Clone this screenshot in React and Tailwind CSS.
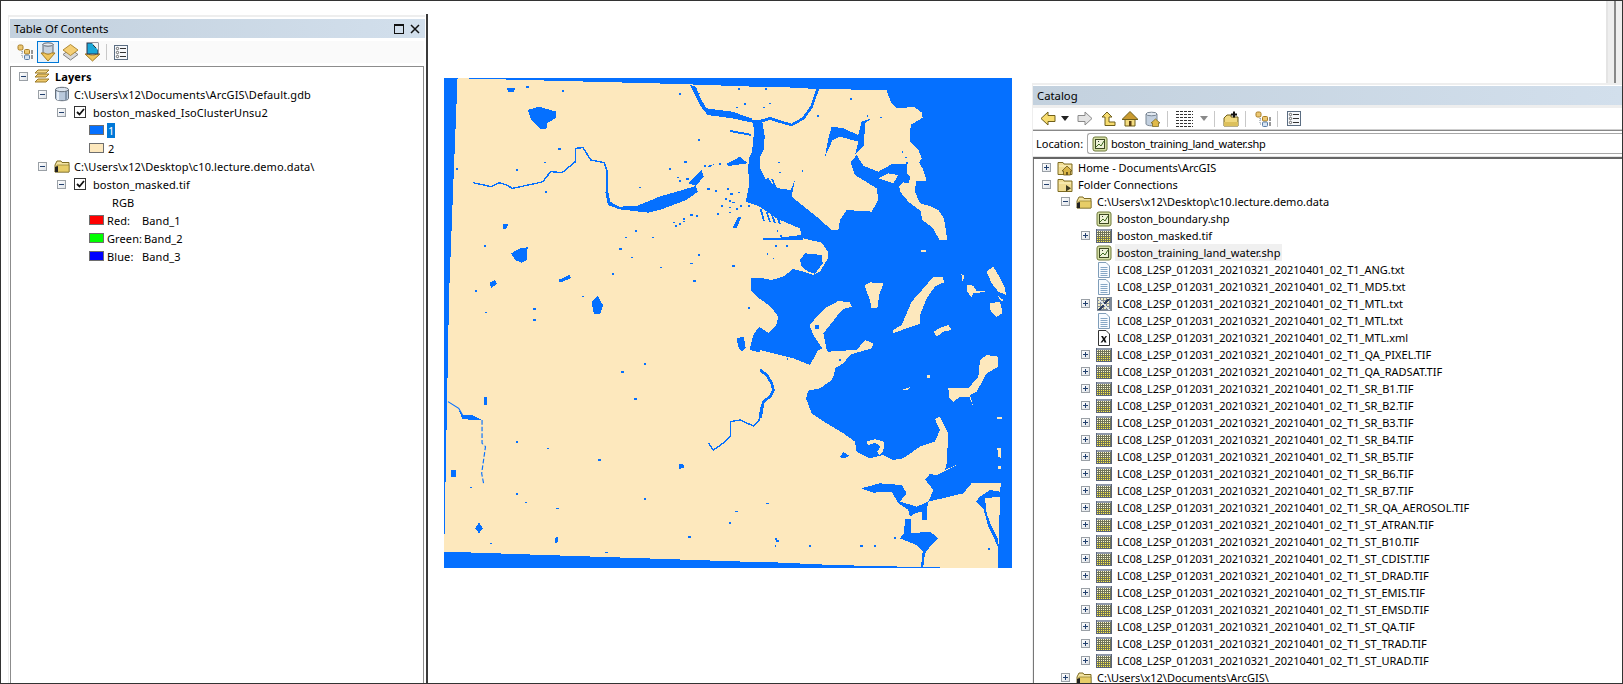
import React from "react";

/* ---------- small icons ---------- */
const Expander = ({ open }) => (
  <span className="relative block w-[9px] h-[9px] shrink-0 border border-[#9aa0a6] bg-gradient-to-br from-white to-[#dfe3e8]">
    <span className="absolute left-[1px] top-[3px] w-[5px] h-[1px] bg-[#22406e]" />
    {!open && <span className="absolute left-[3px] top-[1px] w-[1px] h-[5px] bg-[#22406e]" />}
  </span>
);

const Svg = ({ w = 16, h = 16, children }) => (
  <svg width={w} height={h} viewBox="0 0 16 16" className="shrink-0 block">
    {children}
  </svg>
);

const DbIcon = () => (
  <Svg>
    <path d="M1.5 3.5v9c0 1.2 2.9 2.2 6.5 2.2s6.5-1 6.5-2.2v-9z" fill="#b9c9dc" stroke="#66707c" />
    <path d="M4 5v9" stroke="#e8eff7" strokeWidth="2" />
    <path d="M12 5v9" stroke="#8496ab" strokeWidth="2" />
    <ellipse cx="8" cy="3.5" rx="6.5" ry="2.2" fill="#dbe4ee" stroke="#66707c" />
  </Svg>
);

const HomeFolderIcon = () => (
  <Svg>
    <path d="M1 2.5h5L7 4h8v10.5H1z" fill="#f0dc92" stroke="#7d6b22" />
    <path d="M2 6h12" stroke="#fff6c8" />
    <path d="M5 11l5-5 5 5h-1.5v4h-7v-4z" fill="#d8b445" stroke="#6b5518" strokeWidth=".8" />
    <path d="M9 12h2v3H9z" fill="#6b5518" />
  </Svg>
);

const ConnFolderIcon = () => (
  <Svg>
    <path d="M1 2.5h5L7 4h8v10.5H1z" fill="#f0dc92" stroke="#7d6b22" />
    <path d="M2 6h12" stroke="#fff6c8" />
    <path d="M9 8l5 3.2-5 3.2z" fill="#3d3a22" />
  </Svg>
);

const OpenFolderIcon = () => (
  <Svg>
    <path d="M3 3h4l1 1.5h7V14H1V7z" fill="#f3e3a0" stroke="#7d6b22" />
    <path d="M3 7h12v7H1z" fill="#e7cd68" stroke="#7d6b22" strokeWidth=".6" />
    <path d="M1 9l3-1v6H1z" fill="#222" />
  </Svg>
);

const RasterIcon = () => (
  <svg width="16" height="16" viewBox="0 0 16 16" className="shrink-0 block" shapeRendering="crispEdges">
    <rect x="0" y="1" width="16" height="14" rx="1.5" fill="#59647a" />
    <rect x="1" y="1" width="14" height="2" fill="#8d97a8" />
    <rect x="1" y="3" width="14" height="11" fill="#6f7358" />
    {[3, 5, 7, 9, 11, 13].map((y) =>
      [1, 3, 5, 7, 9, 11, 13].map((x) => (
        <rect key={x + "-" + y} x={x} y={y} width="1" height="1" fill={y > 8 ? "#fff04a" : "#fffbd0"} />
      ))
    )}
  </svg>
);

const ShpIcon = () => (
  <Svg>
    <rect x="1" y="1" width="14" height="14" rx="2" fill="#d5dfa6" stroke="#6f7a3a" />
    <rect x="3.5" y="3.5" width="9" height="9" fill="#eef2d8" stroke="#3e4a22" />
    <path d="M4 11l3-3 2 2 3-5" fill="none" stroke="#3e6a22" />
    <path d="M6 5h1v1H6z" fill="#333" />
  </Svg>
);

const TextIcon = () => (
  <Svg>
    <path d="M2.5 .5h7.5l3.5 3.5v11.5h-11z" fill="#f7fbff" stroke="#7f9db9" />
    <path d="M4.5 5.5h7M4.5 7.5h7M4.5 9.5h7M4.5 11.5h7M4.5 13.5h7" stroke="#86a7c6" />
  </Svg>
);

const MetaIcon = () => (
  <svg width="16" height="16" viewBox="0 0 16 16" className="shrink-0 block" shapeRendering="crispEdges">
    <rect x="0.5" y="1" width="15" height="14" fill="#7f8a98" />
    {[2, 5, 8, 11].map((y) =>
      [2, 5, 8, 11].map((x) => (
        <rect key={x + "-" + y} x={x} y={y} width="2" height="2" fill="#f1ecc2" />
      ))
    )}
    <path d="M3 14L13 3" stroke="#2f3f5f" strokeWidth="2" />
    <path d="M3 3l10 11" stroke="#dfe7f0" strokeWidth="1.5" />
  </svg>
);

const XmlIcon = () => (
  <Svg>
    <path d="M2.5 .5h7.5l3.5 3.5v11.5h-11z" fill="#fff" stroke="#333" />
    <path d="M5 6h2l1 2 1.600-2H11L9 9l1.500 3.500H8.500L7.800 10.500 6.200 12.500H4.500L7 9.200z" fill="#111" />
  </Svg>
);

const TreeToolIcon = () => (
  <svg width="17" height="16" viewBox="0 0 17 16" className="shrink-0 block">
    <path d="M5 3v10h6M5 8h6" fill="none" stroke="#7d8b99" strokeDasharray="1 1" />
    <rect x="1" y="1" width="5" height="5" rx="1.500" fill="#ecc873" stroke="#a87d25" />
    <rect x="7.500" y="5.500" width="5" height="4.500" rx="1" fill="#ecc873" stroke="#a87d25" />
    <rect x="7.500" y="11" width="5" height="4.500" rx="1" fill="#d5e3f2" stroke="#5a7da6" />
    <path d="M14 7h2M14 9h2M14 12h2M14 14h2" stroke="#333" />
  </svg>
);

const DownArrowDb = () => (
  <svg width="16" height="20" viewBox="0 0 16 20" className="block">
    <path d="M3 2v9c0 1 2.200 1.700 5 1.700s5-.7 5-1.700V2z" fill="#c7d2de" stroke="#5e6773" />
    <ellipse cx="8" cy="2.500" rx="5" ry="1.700" fill="#e4eaf1" stroke="#5e6773" />
    <path d="M1 11h3.500c1 1.500 6 1.500 7 0H15l-7 8z" fill="#f0c55b" stroke="#a27a22" />
  </svg>
);

const LayersToolIcon = () => (
  <svg width="17" height="18" viewBox="0 0 17 18" className="block">
    <path d="M8.500 6L16 11.500 8.500 17 1 11.500z" fill="#d8d8d8" stroke="#808080" />
    <path d="M8.500 1.500L16 7l-7.500 5.500L1 7z" fill="#f5cf75" stroke="#b08a34" />
  </svg>
);

const SourceToolIcon = () => (
  <svg width="17" height="20" viewBox="0 0 17 20" className="block">
    <path d="M1 12h3.500c1 1.500 7 1.500 8 0H16l-7.500 7z" fill="#f0c55b" stroke="#a27a22" />
    <rect x="3" y="1" width="11" height="11" fill="#1aa7d8" stroke="#334" />
    <path d="M8 1h6v7z" fill="#f5f5f5" />
    <path d="M9 3l3 3" stroke="#333" />
  </svg>
);

const ListIcon = () => (
  <svg width="14" height="15" viewBox="0 0 14 15" className="block">
    <rect x=".5" y=".5" width="13" height="14" fill="#f6f8fb" stroke="#5b6d82" />
    <path d="M6 3.500h6M6 7.500h6M6 11.500h6" stroke="#333" />
    <circle cx="3.500" cy="3.500" r="1.200" fill="#fff" stroke="#333" strokeWidth=".7" />
    <circle cx="3.500" cy="7.500" r="1.200" fill="#fff" stroke="#333" strokeWidth=".7" />
    <circle cx="3.500" cy="11.500" r="1.200" fill="#fff" stroke="#333" strokeWidth=".7" />
  </svg>
);

const LayersIcon = () => (
  <svg width="16" height="15" viewBox="0 0 16 15" className="block">
    <path d="M4 1h11l-3 3H1z" fill="#f5d98a" stroke="#9a7a2a" />
    <path d="M4 5h11l-3 3H1z" fill="#eec86a" stroke="#9a7a2a" />
    <path d="M4 10h11l-3 3H1z" fill="#eec86a" stroke="#9a7a2a" />
  </svg>
);

const CheckBox = () => (
  <span className="flex items-center justify-center w-[12px] h-[12px] shrink-0 border border-[#333] bg-white">
    <svg width="9" height="8" viewBox="0 0 9 8">
      <path d="M1 4l2.500 2.500L8 1" fill="none" stroke="#111" strokeWidth="1.800" />
    </svg>
  </span>
);

const Sep = () => <span className="block w-[1px] h-[16px] bg-[#c8c8c8] shrink-0" />;

/* ---------- map ---------- */
const Z4 = "translate(430 60) scale(0.3827 0.3333)";
const Z = "scale(0.3333)";

const west =
  "72,54 112,56 450,66 650,72 870,81 870,180 850,180 840,290 830,320 835,370 825,425 862,440 905,475 966,505 971,525 914,533 975,535 1023,548 1040,575 1040,595 1019,635 1001,645 975,635 949,627 923,650 892,660 862,653 840,655 838,690 860,715 890,740 910,770 905,795 885,820 860,800 845,825 835,870 870,880 870,1507 37,1475 40,1300 45,1000 50,700 60,400";

const northEast =
  "0,36 60,36 172,42 205,42 380,46 392,80 410,100 462,96 485,112 488,128 452,150 450,200 475,225 485,250 478,262 490,285 500,318 468,318 465,350 480,385 510,393 535,405 552,430 562,495 538,495 520,460 487,435 482,408 445,380 420,350 418,335 430,322 445,325 452,305 440,295 440,268 395,268 355,290 310,272 290,240 272,262 285,300 350,340 355,375 335,410 260,405 240,435 235,465 215,465 170,425 95,365 105,315 92,345 55,340 15,310 0,280";

const northEastIslands = [
  "355,310 385,295 415,300 400,325",
  "315,630 330,622 370,625 358,660 352,700 335,700 328,670 318,645",
  "400,775 440,760 480,747 480,720 500,670 525,635 552,622 548,605 520,605 495,635 455,680 425,750 400,765",
  "148,750 195,700 235,678 270,682 275,695 250,702 225,730 222,735 190,775 200,825 190,825 160,780",
  "680,590 700,575 715,600 735,640 738,660 715,650 695,625",
  "620,630 640,632 650,648 680,650 640,655 635,668 622,650",
  "690,685 720,680 728,715 710,725 692,710",
  "710,660 730,675 725,680",
  "604,598 614,600 608,620",
  "483,525 498,525 498,530 483,530",
];

const northEastDots = [
  [270, 70], [320, 120], [360, 125], [425, 228], [435, 245], [10, 95], [55, 260], [125, 285], [50, 465], [20, 535],
  [60, 480], [45, 510], [38, 548], [78, 510], [478, 210], [485, 240], [490, 250], [172, 120], [58, 290], [438, 262],
];

const southEast =
  "0,90 40,100 100,115 150,135 175,90 195,85 205,95 250,92 290,90 315,60 340,70 335,85 300,95 270,105 250,130 225,145 222,165 215,180 180,205 145,212 138,235 155,280 200,310 250,340 285,365 290,395 330,415 370,405 400,420 430,415 480,380 525,365 540,330 525,298 540,290 565,340 560,430 555,450 590,435 560,450 530,465 510,462 495,478 520,510 505,545 610,520 635,490 722,488 715,690 715,744 600,744 215,735 0,725";

const southEastIslands = [
  "520,35 545,22 565,15 575,30 550,35 530,50",
  "565,205 600,205 625,205 655,170 660,120 680,105 715,110 715,140 680,160 650,215 630,225 640,260 628,230 600,230 580,245 568,235",
  "710,292 725,292 725,298 712,298",
  "430,208 450,202 445,208 432,212",
  "500,165 510,165 510,175 503,175",
  "712,385 722,385 722,415 715,410",
  "715,438 722,438 722,448 715,448",
  "318,365 345,358 372,365 370,395 358,405 352,395 362,380 345,368 325,375",
];

const southEastWater = [
  "303,505 360,490 425,495 440,520 420,545 470,560 505,545 500,575 500,600 485,600 485,575 465,580 450,590 445,570 415,550 395,515 340,518",
  "435,598 452,598 452,640 510,635 535,655 510,680 495,700 490,740 483,740 488,695 470,675 420,655 432,640",
  "720,515 690,510 660,530 648,545 670,565 685,620 700,650 715,685 715,660 695,620 680,580 675,535 720,530",
  "240,412 250,396 268,408 255,415",
];

const southEastDots = [
  [18, 548], [46, 655], [148, 675], [342, 675], [300, 675], [44, 675], [80, 115], [238, 118], [70, 100], [95, 110], [684, 685], [402, 652],
];

const westWater = [
  "680,75 695,80 705,110 722,145 790,155 840,175 850,190 790,175 725,165 705,135 690,100",
  "458,395 468,400 470,425 495,440 540,438 600,410 695,378 700,395 670,420 605,448 570,458 495,448 465,435",
  "675,370 710,330 715,350 695,378",
  "775,312 810,290 830,310 780,318",
  "725,318 745,312 730,322",
  "255,150 285,140 330,155 328,175 305,190 305,205 290,208 265,180",
  "200,85 222,85 220,95 205,95",
  "190,492 205,492 198,508 190,505",
  "212,580 235,565 255,562 253,600 240,608 222,600",
  "335,660 365,645 368,655 340,668",
  "155,668 170,660 175,672 160,684",
  "422,725 438,708 452,735 445,762 428,762",
  "802,835 820,830 825,865 815,875 805,860",
  "140,1012 148,1012 148,1035 140,1035",
  "75,1050 85,1065 110,1065 135,1080 85,1078",
  "55,1230 68,1230 68,1250 55,1250",
  "128,1388 138,1405 128,1420 118,1405",
  "650,1212 662,1212 664,1225 652,1226",
  "328,1432 335,1432 333,1448 327,1448",
  "790,505 805,470 815,470 800,505",
  "785,210 840,222 840,228 785,216",
];

const dots = [
  [650, 100], [700, 98], [805, 85], [875, 85], [885, 128], [820, 130], [800, 140], [700, 237], [335, 265], [298, 305], [225, 328], [68, 325],
  [345, 90], [252, 78], [665, 303], [625, 325], [645, 350], [650, 360], [670, 355], [545, 380], [300, 393], [715, 315], [755, 310], [775, 385],
  [785, 400], [805, 395], [770, 415], [780, 420], [790, 425], [760, 435], [780, 440], [800, 445], [810, 435], [750, 460], [780, 455], [830, 435], [835, 370],
  [725, 385], [745, 390], [635, 485], [650, 490], [660, 482], [640, 495], [680, 462], [695, 465], [660, 475], [535, 510], [510, 530], [580, 530],
  [495, 565], [525, 590], [600, 620], [680, 608], [700, 582], [790, 615], [475, 640], [688, 660], [117, 690], [397, 707], [270, 745], [140, 555],
  [558, 910], [500, 933], [534, 1015], [270, 778], [143, 755], [830, 742], [225, 1143], [305, 1163], [440, 1197], [248, 1325], [330, 1343], [558, 1315],
  [880, 1328], [780, 1387], [798, 1352], [905, 1440], [990, 1455], [1125, 1456], [156, 1448], [458, 1475], [675, 1428], [105, 1280], [225, 1300],
];

const BostonMap = () => (
  <svg width="568" height="490" viewBox="444 78 568 490" className="block shrink-0" shapeRendering="crispEdges">
    <rect x="444" y="78" width="568" height="490" fill="#0570ff" />
    <g fill="#fde8bd" transform={Z4}>
      <polygon points={west} />
    </g>
    <g transform="translate(760 75)">
      <g transform={Z} fill="#fde8bd">
        <polygon points={northEast} />
        {northEastIslands.map((p) => (
          <polygon key={p} points={p} />
        ))}
        <polygon fill="#0570ff" points="120,555 135,535 185,540 188,565 165,597 145,590 125,575" />
        <polygon fill="#0570ff" points="195,245 205,190 215,155 250,160 295,180 305,140 335,130 315,145 312,210 285,240 295,200 240,185 218,195" />
        <polyline fill="none" stroke="#0570ff" strokeWidth="8" points="0,140 30,130 60,140 95,150 130,130 155,95 175,36" />
        <path fill="none" stroke="#0570ff" strokeWidth="5" d="M10 492 H130 M0 300 L12 322 M22 308 L32 325 M36 312 L46 335 M2 402 L12 438 M20 410 L30 442 M36 420 L45 445 M52 425 L60 448" />
        {northEastDots.map(([x, y]) => (
          <rect key={x + "," + y} x={x} y={y} width="5" height="5" fill="#0570ff" />
        ))}
      </g>
    </g>
    <g transform="translate(760 320)">
      <g transform={Z} fill="#fde8bd">
        <polygon points={southEast} />
        {southEastIslands.map((p) => (
          <polygon key={p} points={p} />
        ))}
        <g fill="#0570ff">
          {southEastWater.map((p) => (
            <polygon key={p} points={p} />
          ))}
          <polygon points="165,14 176,14 176,26 165,26" />
          {southEastDots.map(([x, y]) => (
            <rect key={x + "," + y} x={x} y={y} width="5" height="5" />
          ))}
        </g>
        <polyline fill="none" stroke="#0570ff" strokeWidth="8" points="0,150 20,165 35,190 40,210 30,230 10,245 5,270 2,295" />
      </g>
    </g>
    <g fill="#0570ff" transform={Z4}>
      {westWater.map((p) => (
        <polygon key={p} points={p} />
      ))}
      {dots.map(([x, y]) => (
        <rect key={x + "," + y} x={x} y={y} width="6" height="5" />
      ))}
      <polyline
        fill="none"
        stroke="#0570ff"
        strokeWidth="25"
        points="855,180 862,230 860,265 845,300 845,340 850,420"
      />
      <polyline
        fill="none"
        stroke="#0570ff"
        strokeWidth="4"
        points="112,368 160,380 180,368 200,375 215,385 270,372 295,365 315,335 345,338 380,305 380,265 400,263 420,300 455,308 462,330 462,400"
      />
      <polyline fill="none" stroke="#0570ff" strokeWidth="4" points="865,1040 860,1080 845,1098 810,1080 785,1085 785,1130 760,1155 740,1170 728,1150" />
      <polyline fill="none" stroke="#0570ff" strokeWidth="3" strokeDasharray="14 6" points="136,1080 136,1150 145,1160 135,1240 140,1270" />
      <polyline fill="none" stroke="#0570ff" strokeWidth="3" points="47,1025 75,1045 85,1065" />
    </g>
    <polygon fill="#fde8bd" points="658,219 660,219 662,231 660,231" />
  </svg>
);

/* ---------- table of contents ---------- */
const TocRow = ({ className, children }) => (
  <div className={"flex items-center h-[18px] shrink-0 whitespace-pre " + className}>{children}</div>
);

const Swatch = ({ color }) => (
  <span className={"block w-[15px] h-[10px] shrink-0 border border-[#6e6e6e] " + color} />
);

const TableOfContents = () => (
  <div className="h-full min-h-0 flex flex-col border-l border-t-2 border-[#eeeeee] pt-[2px] pl-[1px]">
    <div className="h-[19px] shrink-0 flex items-center justify-between pl-[4px] pr-[5px] bg-gradient-to-r from-[#c3d1de] to-[#d2dfec] text-[11.3px]">
      <span>Table Of Contents</span>
      <span className="flex items-center gap-[6px]">
        <span className="block w-[10px] h-[10px] border border-[#111] border-t-2" />
        <svg width="10" height="10" viewBox="0 0 10 10" className="block">
          <path d="M1 1l8 8M9 1l-8 8" stroke="#111" strokeWidth="1.500" />
        </svg>
      </span>
    </div>
    <div className="mt-[3px] h-[22px] shrink-0 flex items-center bg-[#fafafa] pl-[7px] mr-[1px]">
      <TreeToolIcon />
      <span className="ml-[3px] w-[22px] h-[22px] flex items-center justify-center border border-[#0078d7] bg-[#e5f1fb]">
        <DownArrowDb />
      </span>
      <span className="ml-[3px]"><LayersToolIcon /></span>
      <span className="ml-[5px]"><SourceToolIcon /></span>
      <span className="ml-[5px]"><Sep /></span>
      <span className="ml-[7px]"><ListIcon /></span>
    </div>
    <div className="mt-[3px] flex-1 min-h-0 flex flex-col border-t border-l border-r border-[#8c8c8c] bg-white mr-[1px] tracking-[0.1px]">
      <TocRow className="pl-[8px]">
        <Expander open />
        <span className="ml-[6px]"><LayersIcon /></span>
        <span className="ml-[5px] font-bold">Layers</span>
      </TocRow>
      <TocRow className="pl-[27px]">
        <Expander open />
        <span className="ml-[7px]"><DbIcon /></span>
        <span className="ml-[4px]">C:\Users\x12\Documents\ArcGIS\Default.gdb</span>
      </TocRow>
      <TocRow className="pl-[46px]">
        <Expander open />
        <span className="ml-[8px]"><CheckBox /></span>
        <span className="ml-[7px]">boston_masked_IsoClusterUnsu2</span>
      </TocRow>
      <TocRow className="pl-[78px]">
        <Swatch color="bg-[#0570ff]" />
        <span className="ml-[3px] px-[1px] bg-[#0078d7] text-white leading-[15px]">1</span>
      </TocRow>
      <TocRow className="pl-[78px]">
        <Swatch color="bg-[#fde8bd]" />
        <span className="ml-[3px] px-[1px]">2</span>
      </TocRow>
      <TocRow className="pl-[27px]">
        <Expander open />
        <span className="ml-[7px]"><OpenFolderIcon /></span>
        <span className="ml-[4px]">C:\Users\x12\Desktop\c10.lecture.demo.data\</span>
      </TocRow>
      <TocRow className="pl-[46px]">
        <Expander open />
        <span className="ml-[8px]"><CheckBox /></span>
        <span className="ml-[7px]">boston_masked.tif</span>
      </TocRow>
      <TocRow className="pl-[101px]">RGB</TocRow>
      {[
        ["bg-[#ff0000]", "Red:", "Band_1", "w-[35px]"],
        ["bg-[#00ff00]", "Green:", "Band_2", "w-[37px]"],
        ["bg-[#0000ff]", "Blue:", "Band_3", "w-[35px]"],
      ].map(([color, label, band, width]) => (
        <TocRow key={label} className="pl-[78px]">
          <Swatch color={color} />
          <span className={"ml-[3px] " + width}>{label}</span>
          <span>{band}</span>
        </TocRow>
      ))}
    </div>
  </div>
);

/* ---------- catalog ---------- */
const prefix = "LC08_L2SP_012031_20210321_20210401_02_T1_";

const catalogRows = [
  { pad: "pl-[8px]", exp: "plus", icon: <HomeFolderIcon />, text: "Home - Documents\\ArcGIS" },
  { pad: "pl-[8px]", exp: "minus", icon: <ConnFolderIcon />, text: "Folder Connections" },
  { pad: "pl-[27px]", exp: "minus", icon: <OpenFolderIcon />, text: "C:\\Users\\x12\\Desktop\\c10.lecture.demo.data" },
  { pad: "pl-[47px]", icon: <ShpIcon />, text: "boston_boundary.shp" },
  { pad: "pl-[47px]", exp: "plus", icon: <RasterIcon />, text: "boston_masked.tif" },
  { pad: "pl-[47px]", icon: <ShpIcon />, text: "boston_training_land_water.shp", selected: true },
  { pad: "pl-[47px]", icon: <TextIcon />, text: prefix + "ANG.txt" },
  { pad: "pl-[47px]", icon: <TextIcon />, text: prefix + "MD5.txt" },
  { pad: "pl-[47px]", exp: "plus", icon: <MetaIcon />, text: prefix + "MTL.txt" },
  { pad: "pl-[47px]", icon: <TextIcon />, text: prefix + "MTL.txt" },
  { pad: "pl-[47px]", icon: <XmlIcon />, text: prefix + "MTL.xml" },
  ...[
    "QA_PIXEL", "QA_RADSAT", "SR_B1", "SR_B2", "SR_B3", "SR_B4", "SR_B5", "SR_B6", "SR_B7", "SR_QA_AEROSOL",
    "ST_ATRAN", "ST_B10", "ST_CDIST", "ST_DRAD", "ST_EMIS", "ST_EMSD", "ST_QA", "ST_TRAD", "ST_URAD",
  ].map((name) => ({ pad: "pl-[47px]", exp: "plus", icon: <RasterIcon />, text: prefix + name + ".TIF" })),
  { pad: "pl-[27px]", exp: "plus", icon: <OpenFolderIcon />, text: "C:\\Users\\x12\\Documents\\ArcGIS\\" },
];

const CatalogRow = ({ row }) => (
  <div className={"flex items-center h-[17px] shrink-0 whitespace-nowrap " + row.pad}>
    <span className="w-[9px] shrink-0">{row.exp && <Expander open={row.exp === "minus"} />}</span>
    <span className="ml-[6px]">{row.icon}</span>
    <span className={"ml-[3px] px-[2px] " + (row.selected ? "bg-[#f0f0f0] leading-[17px]" : "leading-[11px]")}>{row.text}</span>
  </div>
);

const YellowArrow = ({ gray, flip }) => (
  <svg width="16" height="15" viewBox="0 0 16 15" className="block shrink-0">
    <path
      d={flip ? "M15 7.500L8 1v3.500H1v6h7V14z" : "M1 7.500L8 1v3.500h7v6H8V14z"}
      fill={gray ? "#e4e4e4" : "#f7dc6f"}
      stroke={gray ? "#8a8a8a" : "#6f5f1a"}
    />
  </svg>
);

const Caret = ({ color }) => (
  <svg width="8" height="5" viewBox="0 0 8 5" className="block shrink-0">
    <path d="M0 0h8L4 5z" fill={color} />
  </svg>
);

const CatalogToolbar = () => (
  <div className="h-[21px] shrink-0 flex items-center bg-white pl-[7px]">
    <YellowArrow />
    <span className="ml-[5px]"><Caret color="#222" /></span>
    <span className="ml-[8px]"><YellowArrow gray flip /></span>
    <svg width="16" height="16" viewBox="0 0 16 16" className="ml-[7px] block shrink-0">
      <path d="M7 1l5 5H9v5h6v3.500H5V6H2z" fill="#f7dc6f" stroke="#6f5f1a" />
    </svg>
    <svg width="16" height="16" viewBox="0 0 16 16" className="ml-[6px] block shrink-0">
      <path d="M3 8h10v7H3z" fill="#f4dc80" stroke="#6f5f1a" />
      <path d="M8 .5L16 8.500H0z" fill="#c99a2f" stroke="#6f5f1a" />
      <path d="M7 10h2.500v5H7z" fill="#5d3f12" />
    </svg>
    <svg width="15" height="16" viewBox="0 0 15 16" className="ml-[7px] block shrink-0">
      <path d="M1 3v10c0 1 2.500 1.800 5.500 1.800S12 14 12 13V3z" fill="#c3d0df" stroke="#7b8794" />
      <ellipse cx="6.500" cy="3" rx="5.500" ry="1.800" fill="#e2e9f1" stroke="#7b8794" />
      <path d="M6 12l4.500-4 4.500 4h-1.500v3.500h-6V12z" fill="#e0b94a" stroke="#6f5f1a" strokeWidth=".7" />
    </svg>
    <span className="ml-[7px]"><Sep /></span>
    <svg width="17" height="17" viewBox="0 0 17 17" className="ml-[8px] block shrink-0" shapeRendering="crispEdges">
      <path d="M0 1.500h17M0 4.500h17M0 7.500h17M0 10.500h17M0 13.500h17M0 16.500h17" stroke="#333" strokeDasharray="3 1" />
    </svg>
    <span className="ml-[7px]"><Caret color="#8a8a8a" /></span>
    <span className="ml-[6px]"><Sep /></span>
    <svg width="16" height="16" viewBox="0 0 16 16" className="ml-[8px] block shrink-0">
      <path d="M1 7l3-3h4v2h7v9H1z" fill="#f0d97f" stroke="#6f5f1a" />
      <path d="M1 11h14v4H1z" fill="#dcc05c" />
      <path d="M11 .5v6M8 3.500h6" stroke="#111" strokeWidth="2" />
    </svg>
    <span className="ml-[6px]"><Sep /></span>
    <span className="ml-[9px]"><TreeToolIcon /></span>
    <span className="ml-[5px]"><Sep /></span>
    <span className="ml-[9px]"><ListIcon /></span>
  </div>
);

const Catalog = () => (
  <div className="w-[590px] shrink-0 h-full flex flex-col">
    <div className="h-[82px] shrink-0 flex justify-end">
      <div className="w-[16px] flex border-l-2 border-[#e4e4e4] bg-[#eeeeee] pl-[6px]">
        <span className="block w-[2px] bg-[#888888]" />
      </div>
    </div>
    <div className="flex-1 min-h-0 flex flex-col border-l border-t-2 border-[#eeeeee] pt-[1px]">
      <div className="h-[19px] shrink-0 flex items-center pl-[4px] bg-gradient-to-r from-[#c3d1de] to-[#d2dfec] text-[11.3px]">
        Catalog
      </div>
      <div className="h-[3px] shrink-0 bg-[#eeeeee]" />
      <CatalogToolbar />
      <div className="h-[2px] shrink-0 border-t border-[#cfcfcf] bg-[#888888]" />
      <div className="h-[25px] shrink-0 flex items-center pl-[3px] bg-white">
        <span className="w-[51px]">Location:</span>
        <div className="flex-1 h-[21px] flex items-center pl-[4px] border-t border-b border-l border-[#a8a8a8] rounded-l-[3px]">
          <ShpIcon />
          <span className="ml-[3px] tracking-[-0.3px]">boston_training_land_water.shp</span>
        </div>
      </div>
      <div className="h-[3px] shrink-0 bg-[#e4e4e4] border-b-2 border-[#666666]" />
      <div className="flex-1 min-h-0 overflow-hidden flex flex-col border-l border-[#777777] bg-white">
        {catalogRows.map((row, i) => (
          <CatalogRow key={i} row={row} />
        ))}
      </div>
    </div>
  </div>
);

export default function App() {
  return (
    <div className="w-[1623px] h-[684px] overflow-hidden flex bg-white border border-[#333333] text-[11px] leading-none text-black font-['Noto_Sans',sans-serif]">
      <div className="w-[427px] shrink-0 h-full pt-[13px]">
        <div className="h-full border-r-2 border-[#3a3a3a] pl-[7px] pr-[1px] pt-[1px]">
          <TableOfContents />
        </div>
      </div>
      <div className="flex-1 min-w-0 pl-[16px] pt-[77px]">
        <BostonMap />
      </div>
      <Catalog />
    </div>
  );
}
